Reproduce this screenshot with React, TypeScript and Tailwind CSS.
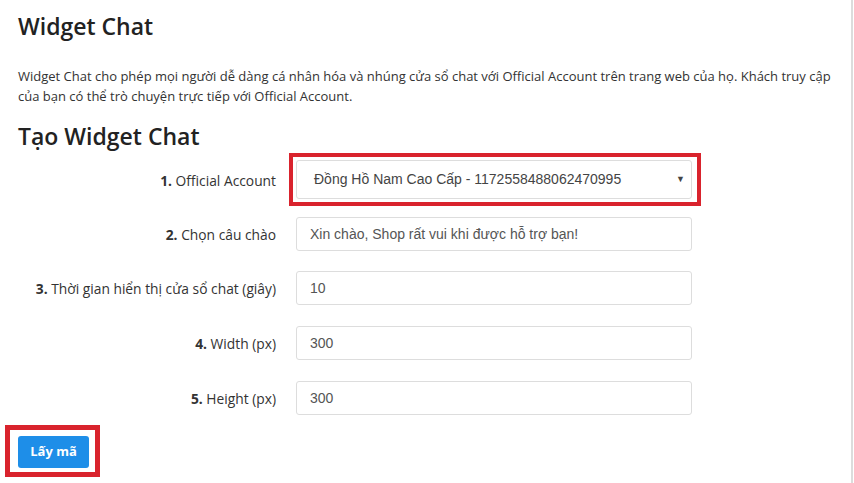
import { useState } from 'react';

const rows = [
  { num: '2.', label: 'Chọn câu chào', value: 'Xin chào, Shop rất vui khi được hỗ trợ bạn!', gap: 'mt-[11px]' },
  { num: '3.', label: 'Thời gian hiển thị cửa sổ chat (giây)', value: '10', gap: 'mt-[20px]' },
  { num: '4.', label: 'Width (px)', value: '300', gap: 'mt-[21px]' },
  { num: '5.', label: 'Height (px)', value: '300', gap: 'mt-[21px]' },
];

function Label({ num, text }: { num: string; text: string }) {
  return (
    <div className="w-[258px] shrink-0 pt-[3px] text-right text-[13.8px] text-[#333]">
      <span className="font-bold">{num}</span> {text}
    </div>
  );
}

export default function App() {
  const [values, setValues] = useState(rows.map((r) => r.value));

  return (
    <div className="flex w-[854px] h-[483px] bg-white overflow-hidden font-['Open_Sans',sans-serif]">
      <div className="flex-1 pl-[18px]">
        {/* Header */}
        <h1 className="mt-[10px] text-[23px] leading-[32px] font-semibold text-[#222]">Widget Chat</h1>
        <p className="mt-[24px] text-[13px] leading-[20px] text-[#333] pr-[10px]">
          Widget Chat cho phép mọi người dễ dàng cá nhân hóa và nhúng cửa sổ chat với Official Account trên trang web của họ. Khách truy cập của bạn có thể trò chuyện trực tiếp với Official Account.
        </p>
        <h2 className="mt-[14px] text-[23px] leading-[32px] font-semibold text-[#222]">Tạo Widget Chat</h2>

        {/* Form */}
        <div className="mt-[1px] flex flex-col">
          <div className="flex items-center gap-[20px]">
            <Label num="1." text="Official Account" />
            <div className="-ml-[7px] border-4 border-[#d9232d] p-[3px] pr-[5px]">
              <div className="relative flex items-center w-[396px] h-[39px] border border-[#ddd] rounded-[3px] bg-white pl-[17px] font-['Liberation_Sans',sans-serif] text-[14px] text-[#444]">
                Đồng Hồ Nam Cao Cấp - 1172558488062470995
                <span className="absolute right-[6px] top-[12px] text-[9px] text-[#444]">▼</span>
              </div>
            </div>
          </div>

          {rows.map((row, i) => (
            <div key={row.num} className={`flex items-center gap-[20px] ${row.gap}`}>
              <Label num={row.num} text={row.label} />
              <input
                value={values[i]}
                onChange={(e) => setValues(values.map((v, j) => (j === i ? e.target.value : v)))}
                className="w-[396px] h-[34px] border border-[#ddd] rounded-[3px] pl-[13px] font-['Liberation_Sans',sans-serif] text-[14px] text-[#555] outline-none"
              />
            </div>
          ))}
        </div>

        {/* Submit */}
        <div className="mt-[10px] -ml-[13px] inline-block border-[5px] border-[#d9232d] pt-[6px] pb-[4px] pl-[8px] pr-[6px]">
          <button className="w-[71px] h-[32px] rounded-[3px] bg-[#1e8ee8] text-white text-[13px] font-bold">
            Lấy mã
          </button>
        </div>
      </div>
      <div className="w-[3px] shrink-0 border-l-2 border-[#dcdcdc]" />
    </div>
  );
}
